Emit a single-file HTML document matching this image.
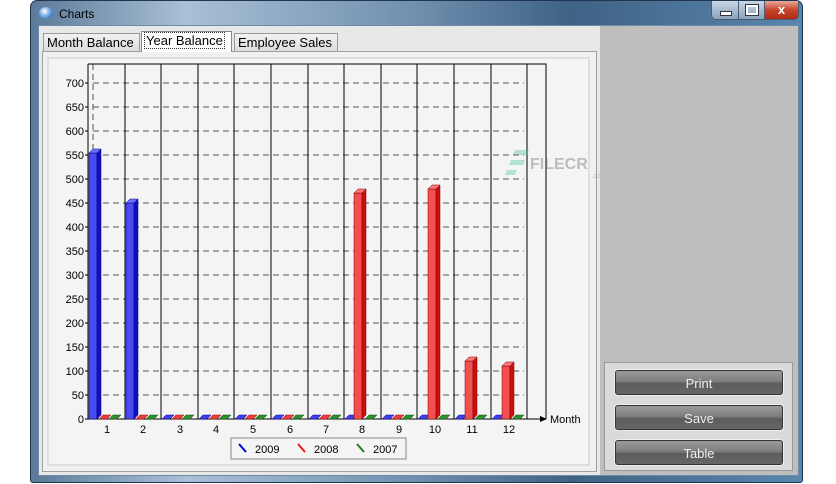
<!DOCTYPE html>
<html><head><meta charset="utf-8"><style>
html,body{margin:0;padding:0;width:836px;height:484px;overflow:hidden;background:#fff;font-family:"Liberation Sans",sans-serif}
.win{position:absolute;left:30px;top:0;width:773px;height:483px;border-radius:7px 7px 3px 3px;background:linear-gradient(90deg,#5b7a99 0%,#a9c0d6 20%,#6f8fae 50%,#3f6285 70%,#5a86ad 100%);border:1px solid #1f3550;box-sizing:border-box}
.title{position:absolute;left:28px;top:6px;font-size:12px;color:#000}
.ico{position:absolute;left:8px;top:6px;width:14px;height:12px;border-radius:50%;background:radial-gradient(circle at 40% 35%,#fff,#6aa0e0 50%,#2050a0)}
.client{position:absolute;left:7px;top:24px;width:759px;height:449px;background:#bebebe;border:1px solid #6d8aa8}
.tabarea{position:absolute;left:0;top:0;width:561px;height:449px;background:#e8e8e8}
.tab{position:absolute;top:7px;height:18px;border:1px solid #999;border-bottom:none;background:linear-gradient(#f2f2f2,#dcdcdc);font-size:13px;line-height:18px;padding:0 3px;box-sizing:border-box;color:#000;white-space:nowrap;overflow:hidden}
.panel{position:absolute;left:3px;top:25px;width:555px;height:421px;border:1px solid #a0a0a0;background:#f0f0f0;box-sizing:border-box}
.btnp{position:absolute;left:565px;top:336px;width:189px;height:109px;background:#dadada;border:1px solid #999;box-sizing:border-box}
.btn{position:absolute;left:10px;width:168px;height:25px;border-radius:3px;border:1px solid #333;background:linear-gradient(#9a9a9a,#7e7e7e 45%,#5c5c5c 55%,#666);color:#f0f0f0;font-size:13px;text-align:center;line-height:25px;box-sizing:border-box;box-shadow:0 0 0 1px #eee}
</style></head><body>
<div class="win">
 <div class="ico"></div><div class="title">Charts</div>
 <div style="position:absolute;left:680px;top:0;width:86px;height:18px;border:1px solid #4a5d73;border-top:none;border-radius:0 0 5px 5px;overflow:hidden;display:flex">
  <div style="width:26px;background:linear-gradient(#c9d6e3,#8aa2bc);border-right:1px solid #4a5d73;position:relative"><div style="position:absolute;left:8px;top:10px;width:10px;height:3px;background:#fff;border:1px solid #334"></div></div>
  <div style="width:25px;background:linear-gradient(#c9d6e3,#8aa2bc);border-right:1px solid #4a5d73;position:relative"><div style="position:absolute;left:7px;top:4px;width:8px;height:6px;border:2px solid #fff;outline:1px solid #334"></div></div>
  <div style="flex:1;background:linear-gradient(#e8a89a,#c8452d 50%,#b02a10);color:#fff;font-weight:bold;font-size:13px;text-align:center;line-height:17px">x</div>
 </div>
 <div class="client">
  <div class="tabarea">
   <div class="tab" style="left:4px;width:97px">Month Balance</div>
   <div class="tab" style="left:195px;width:104px">Employee Sales</div>
   <div class="panel"></div>
   <div class="tab" style="left:102px;top:5px;height:21px;width:91px;background:#fff;border-color:#888"><span style="outline:1px dotted #333;padding:0 1px">Year Balance</span></div>
   <svg style="position:absolute;left:-39px;top:-26px" width="600" height="484" viewBox="0 0 600 484" font-family="Liberation Sans, sans-serif" font-size="11">
    <rect x="48" y="58" width="541" height="407" fill="#f4f4f4" stroke="#ccc"/>
    <g stroke="#555" stroke-dasharray="6,4" stroke-width="1" fill="none">
     <path d="M93 395H524M93 371H524M93 347H524M93 323H524M93 299H524M93 275H524M93 251H524M93 227H524M93 203H524M93 179H524M93 155H524M93 131H524M93 107H524M93 83H524M93 64V419"/>
    </g>
    <g stroke="#000" stroke-width="1" fill="none">
     <path d="M88 64H546V419M88 64V419H540M125 64V419M161 64V419M198 64V419M234 64V419M271 64V419M308 64V419M344 64V419M381 64V419M417 64V419M454 64V419M491 64V419M527 64V419"/>
     <path d="M85 419h3M85 395h3M85 371h3M85 347h3M85 323h3M85 299h3M85 275h3M85 251h3M85 227h3M85 203h3M85 179h3M85 155h3M85 131h3M85 107h3M85 83h3"/>
    </g>
    <path d="M540 416L547 419L540 422Z" fill="#000"/>
    <g text-anchor="end" fill="#000">
     <text x="84" y="423">0</text><text x="84" y="399">50</text><text x="84" y="375">100</text><text x="84" y="351">150</text><text x="84" y="327">200</text><text x="84" y="303">250</text><text x="84" y="279">300</text><text x="84" y="255">350</text><text x="84" y="231">400</text><text x="84" y="207">450</text><text x="84" y="183">500</text><text x="84" y="159">550</text><text x="84" y="135">600</text><text x="84" y="111">650</text><text x="84" y="87">700</text>
    </g>
    <text x="550" y="423">Month</text>
    <g text-anchor="middle">
     <text x="107" y="433">1</text><text x="143" y="433">2</text><text x="180" y="433">3</text><text x="216" y="433">4</text><text x="253" y="433">5</text><text x="290" y="433">6</text><text x="326" y="433">7</text><text x="362" y="433">8</text><text x="399" y="433">9</text><text x="435" y="433">10</text><text x="472" y="433">11</text><text x="509" y="433">12</text>
    </g>
    <defs>
     <polygon id="fb" points="0,419 4,415 12,415 8,419" fill="#4040e8" stroke="#0000a0" stroke-width=".5"/>
     <polygon id="fr" points="0,419 4,415 12,415 8,419" fill="#e84040" stroke="#a00000" stroke-width=".5"/>
     <polygon id="fg" points="0,419 4,415 12,415 8,419" fill="#2f8f2f" stroke="#105010" stroke-width=".5"/>
    </defs>
    <g>
     <use href="#fr" x="99"/><use href="#fg" x="109"/>
     <use href="#fr" x="136"/><use href="#fg" x="146"/>
     <use href="#fb" x="162"/><use href="#fr" x="172"/><use href="#fg" x="182"/>
     <use href="#fb" x="199"/><use href="#fr" x="209"/><use href="#fg" x="219"/>
     <use href="#fb" x="235"/><use href="#fr" x="245"/><use href="#fg" x="255"/>
     <use href="#fb" x="272"/><use href="#fr" x="282"/><use href="#fg" x="292"/>
     <use href="#fb" x="309"/><use href="#fr" x="319"/><use href="#fg" x="329"/>
     <use href="#fb" x="345"/><use href="#fg" x="365"/>
     <use href="#fb" x="382"/><use href="#fr" x="392"/><use href="#fg" x="402"/>
     <use href="#fb" x="418"/><use href="#fg" x="438"/>
     <use href="#fb" x="455"/><use href="#fg" x="475"/>
     <use href="#fb" x="492"/><use href="#fg" x="512"/>
    </g>
    <g stroke="#000080" stroke-width=".5">
     <rect x="89" y="153" width="8" height="266" fill="#4a4af2"/><polygon points="97,153 101,149 101,415 97,419" fill="#1010c0"/><polygon points="89,153 93,149 101,149 97,153" fill="#7070ff"/>
     <rect x="126" y="203" width="8" height="216" fill="#4a4af2"/><polygon points="134,203 138,199 138,415 134,419" fill="#1010c0"/><polygon points="126,203 130,199 138,199 134,203" fill="#7070ff"/>
    </g>
    <g stroke="#800000" stroke-width=".5">
     <rect x="354" y="193" width="8" height="226" fill="#f25050"/><polygon points="362,193 366,189 366,415 362,419" fill="#c81010"/><polygon points="354,193 358,189 366,189 362,193" fill="#ff7878"/>
     <rect x="428" y="189" width="8" height="230" fill="#f25050"/><polygon points="436,189 440,185 440,415 436,419" fill="#c81010"/><polygon points="428,189 432,185 440,185 436,189" fill="#ff7878"/>
     <rect x="465" y="361" width="8" height="58" fill="#f25050"/><polygon points="473,361 477,357 477,415 473,419" fill="#c81010"/><polygon points="465,361 469,357 477,357 473,361" fill="#ff7878"/>
     <rect x="502" y="366" width="8" height="53" fill="#f25050"/><polygon points="510,366 514,362 514,415 510,419" fill="#c81010"/><polygon points="502,366 506,362 514,362 510,366" fill="#ff7878"/>
    </g>
    <rect x="231" y="438" width="175" height="21" fill="#f4f4f4" stroke="#888"/>
    <path d="M239 444l7 8" stroke="#0000e0" stroke-width="2"/><text x="255" y="453">2009</text>
    <path d="M298 444l7 8" stroke="#e02020" stroke-width="2"/><text x="314" y="453">2008</text>
    <path d="M357 444l7 8" stroke="#208020" stroke-width="2"/><text x="373" y="453">2007</text>
    <g opacity=".35"><path d="M515 150h14l-2 5h-14zM511 160h14l-2 5h-14zM507 170h10l-2 5h-10z" fill="#40c090"/><text x="530" y="169" font-size="16" font-weight="bold" fill="#555">FILECR</text><text x="592" y="178" font-size="7" fill="#555">.com</text></g>
   </svg>
  </div>
  <div class="btnp">
   <div class="btn" style="top:7px">Print</div>
   <div class="btn" style="top:42px">Save</div>
   <div class="btn" style="top:77px">Table</div>
  </div>
 </div>
</div>
</body></html>
